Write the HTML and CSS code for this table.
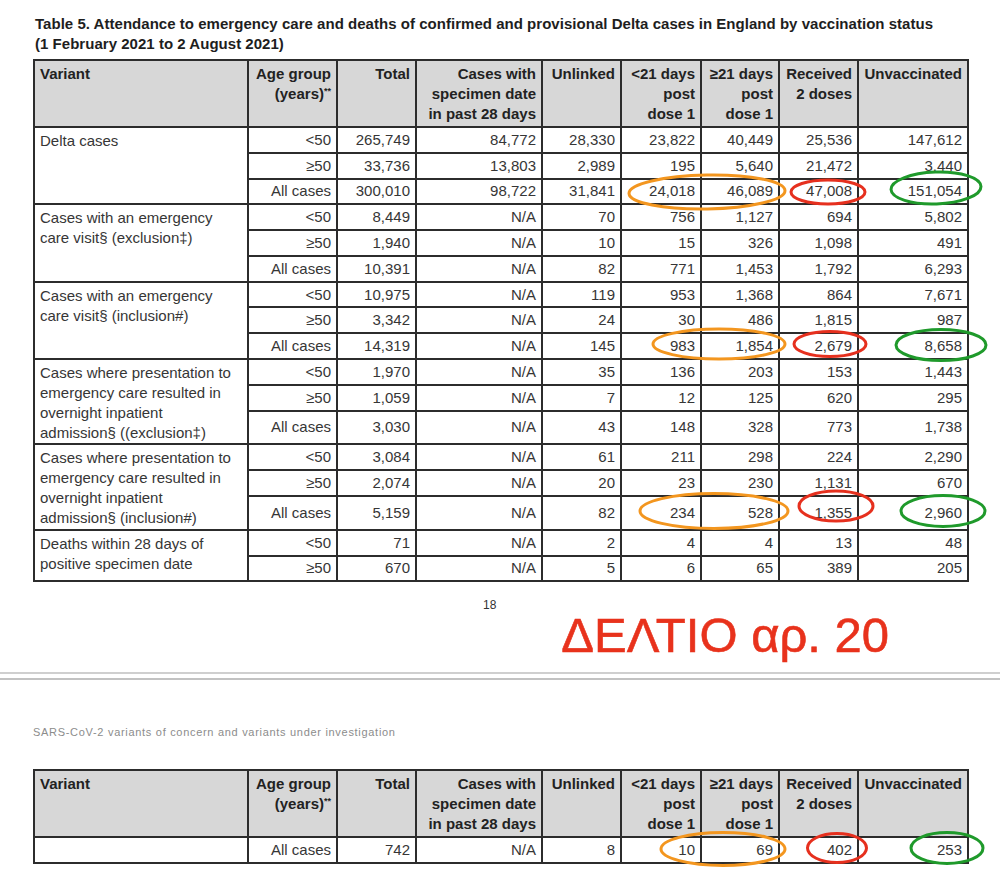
FILE: index.html
```html
<!DOCTYPE html>
<html lang="en">
<head>
<meta charset="utf-8">
<title>Table 5 - Delta cases by vaccination status</title>
<link rel="stylesheet" href="styles.css">
</head>
<body>
<div class="page">
  <div class="doc">
    <h1 class="title">Table 5. Attendance to emergency care and deaths of confirmed and provisional Delta cases in England by vaccination status<br>(1 February 2021 to 2 August 2021)</h1>
    <table class="data">
      <colgroup>
        <col class="c-var"><col class="c-age"><col class="c-tot"><col class="c-spec"><col class="c-unl"><col class="c-d1a"><col class="c-d1b"><col class="c-two"><col class="c-unv">
      </colgroup>
      <thead>
        <tr>
          <th class="var">Variant</th>
          <th>Age group<br>(years)<span class="sup">**</span></th>
          <th>Total</th>
          <th>Cases with<br>specimen date<br>in past 28 days</th>
          <th>Unlinked</th>
          <th>&lt;21 days<br>post<br>dose 1</th>
          <th>&ge;21 days<br>post<br>dose 1</th>
          <th>Received<br>2 doses</th>
          <th>Unvaccinated</th>
        </tr>
      </thead>
      <tbody>
        <tr><td class="var" rowspan="3">Delta cases</td><td>&lt;50</td><td>265,749</td><td>84,772</td><td>28,330</td><td>23,822</td><td>40,449</td><td>25,536</td><td>147,612</td></tr>
        <tr><td>&ge;50</td><td>33,736</td><td>13,803</td><td>2,989</td><td>195</td><td>5,640</td><td>21,472</td><td>3,440</td></tr>
        <tr><td>All cases</td><td>300,010</td><td>98,722</td><td>31,841</td><td>24,018</td><td>46,089</td><td>47,008</td><td>151,054</td></tr>

        <tr><td class="var" rowspan="3">Cases with an emergency<br>care visit§ (exclusion‡)</td><td>&lt;50</td><td>8,449</td><td>N/A</td><td>70</td><td>756</td><td>1,127</td><td>694</td><td>5,802</td></tr>
        <tr><td>&ge;50</td><td>1,940</td><td>N/A</td><td>10</td><td>15</td><td>326</td><td>1,098</td><td>491</td></tr>
        <tr><td>All cases</td><td>10,391</td><td>N/A</td><td>82</td><td>771</td><td>1,453</td><td>1,792</td><td>6,293</td></tr>

        <tr><td class="var" rowspan="3">Cases with an emergency<br>care visit§ (inclusion#)</td><td>&lt;50</td><td>10,975</td><td>N/A</td><td>119</td><td>953</td><td>1,368</td><td>864</td><td>7,671</td></tr>
        <tr><td>&ge;50</td><td>3,342</td><td>N/A</td><td>24</td><td>30</td><td>486</td><td>1,815</td><td>987</td></tr>
        <tr><td>All cases</td><td>14,319</td><td>N/A</td><td>145</td><td>983</td><td>1,854</td><td>2,679</td><td>8,658</td></tr>

        <tr><td class="var" rowspan="3">Cases where presentation to<br>emergency care resulted in<br>overnight inpatient<br>admission§ ((exclusion‡)</td><td>&lt;50</td><td>1,970</td><td>N/A</td><td>35</td><td>136</td><td>203</td><td>153</td><td>1,443</td></tr>
        <tr><td>&ge;50</td><td>1,059</td><td>N/A</td><td>7</td><td>12</td><td>125</td><td>620</td><td>295</td></tr>
        <tr class="tall"><td>All cases</td><td>3,030</td><td>N/A</td><td>43</td><td>148</td><td>328</td><td>773</td><td>1,738</td></tr>

        <tr><td class="var" rowspan="3">Cases where presentation to<br>emergency care resulted in<br>overnight inpatient<br>admission§ (inclusion#)</td><td>&lt;50</td><td>3,084</td><td>N/A</td><td>61</td><td>211</td><td>298</td><td>224</td><td>2,290</td></tr>
        <tr><td>&ge;50</td><td>2,074</td><td>N/A</td><td>20</td><td>23</td><td>230</td><td>1,131</td><td>670</td></tr>
        <tr class="tall"><td>All cases</td><td>5,159</td><td>N/A</td><td>82</td><td>234</td><td>528</td><td>1,355</td><td>2,960</td></tr>

        <tr><td class="var" rowspan="2">Deaths within 28 days of<br>positive specimen date</td><td>&lt;50</td><td>71</td><td>N/A</td><td>2</td><td>4</td><td>4</td><td>13</td><td>48</td></tr>
        <tr><td>&ge;50</td><td>670</td><td>N/A</td><td>5</td><td>6</td><td>65</td><td>389</td><td>205</td></tr>
      </tbody>
    </table>
  </div>

  <div class="pagefoot">
    <span class="pagenum">18</span>
    <span class="stamp">ΔΕΛΤΙΟ αρ. 20</span>
  </div>

  <div class="sep"></div>

  <div class="doc doc2">
    <p class="running">SARS-CoV-2 variants of concern and variants under investigation</p>
    <table class="data">
      <colgroup>
        <col class="c-var"><col class="c-age"><col class="c-tot"><col class="c-spec"><col class="c-unl"><col class="c-d1a"><col class="c-d1b"><col class="c-two"><col class="c-unv">
      </colgroup>
      <thead>
        <tr>
          <th class="var">Variant</th>
          <th>Age group<br>(years)<span class="sup">**</span></th>
          <th>Total</th>
          <th>Cases with<br>specimen date<br>in past 28 days</th>
          <th>Unlinked</th>
          <th>&lt;21 days<br>post<br>dose 1</th>
          <th>&ge;21 days<br>post<br>dose 1</th>
          <th>Received<br>2 doses</th>
          <th>Unvaccinated</th>
        </tr>
      </thead>
      <tbody>
        <tr><td class="var"></td><td>All cases</td><td>742</td><td>N/A</td><td>8</td><td>10</td><td>69</td><td>402</td><td>253</td></tr>
      </tbody>
    </table>
  </div>

  <svg class="marks" width="1000" height="876" viewBox="0 0 1000 876" aria-hidden="true">
    <g fill="none" stroke-width="3">
      <ellipse class="m-or" cx="707" cy="192" rx="78" ry="17" transform="rotate(-1 707 192)"/>
      <ellipse class="m-rd" cx="828" cy="192" rx="37" ry="12"/>
      <ellipse class="m-gr" cx="936" cy="188" rx="45" ry="16" transform="rotate(-2 936 188)"/>

      <ellipse class="m-or" cx="719" cy="344" rx="66" ry="15"/>
      <ellipse class="m-rd" cx="830" cy="344" rx="36" ry="12.5"/>
      <ellipse class="m-gr" cx="941" cy="345" rx="45" ry="15.5"/>

      <ellipse class="m-or" cx="714" cy="511" rx="74" ry="17.5"/>
      <ellipse class="m-rd" cx="836" cy="506" rx="37" ry="15"/>
      <ellipse class="m-gr" cx="943" cy="511" rx="42" ry="15.5"/>

      <ellipse class="m-or" cx="723" cy="849" rx="62" ry="16.5"/>
      <ellipse class="m-rd" cx="837" cy="848" rx="29.5" ry="14.5"/>
      <ellipse class="m-gr" cx="947" cy="848" rx="36" ry="15.5"/>
    </g>
  </svg>
</div>
</body>
</html>
```

FILE: styles.css
```css
html, body {
  margin: 0;
  padding: 0;
  background: #ffffff;
}

body {
  font-family: "Liberation Sans", Arial, sans-serif;
  color: #363636;
}

.page {
  position: relative;
  width: 1000px;
  height: 876px;
  overflow: hidden;
}

.doc {
  padding: 14px 0 0 33px;
}

.title {
  margin: 0 0 5px 2px;
  font-size: 15px;
  line-height: 20px;
  font-weight: bold;
  letter-spacing: 0.03px;
  color: #1e1e1e;
}

.data {
  width: 934px;
  border-collapse: collapse;
  table-layout: fixed;
  font-size: 15px;
  line-height: 20px;
}

.c-var { width: 214px; }
.c-age { width: 89px; }
.c-tot { width: 79px; }
.c-spec { width: 126px; }
.c-unl { width: 79px; }
.c-d1a { width: 80px; }
.c-d1b { width: 78px; }
.c-two { width: 79px; }
.c-unv { width: 110px; }

.data th,
.data td {
  border: 2px solid #2c2c2c;
  text-align: right;
  white-space: nowrap;
}

.data th {
  background: #d7d7d7;
  color: #222222;
  font-weight: bold;
  vertical-align: top;
  padding: 3px 5px 2px 5px;
}

.data td {
  padding: 1.9px 5px;
  vertical-align: middle;
}

.data .tall td {
  padding-top: 5.9px;
  padding-bottom: 5.9px;
}

.data th.var,
.data td.var {
  text-align: left;
}

.data td.var {
  vertical-align: top;
  padding: 3px 5px 0 5px;
}

.sup {
  font-size: 9px;
  vertical-align: 5px;
  line-height: 0;
}

.pagefoot {
  display: flex;
  align-items: flex-start;
  height: 90px;
  padding-left: 483px;
}

.pagenum {
  margin-top: 17px;
  font-size: 12px;
  line-height: 12px;
  color: #333333;
}

.stamp {
  margin-top: 29px;
  margin-left: 65px;
  font-size: 49px;
  line-height: 48px;
  color: #e8321c;
  -webkit-text-stroke: 0.6px #e8321c;
  white-space: nowrap;
}

.sep {
  height: 4px;
  border-top: 2px solid #cfcfcf;
  border-bottom: 2px solid #c2c2c2;
}

.doc2 {
  padding-top: 45px;
}

.running {
  margin: 0 0 30px 0;
  font-size: 11px;
  line-height: 14px;
  letter-spacing: 0.7px;
  color: #8c8c8c;
}

.marks {
  position: absolute;
  left: 0;
  top: 0;
  pointer-events: none;
}

.m-or { stroke: #f3961f; }
.m-rd { stroke: #e6301e; }
.m-gr { stroke: #1f9a2b; }
```
